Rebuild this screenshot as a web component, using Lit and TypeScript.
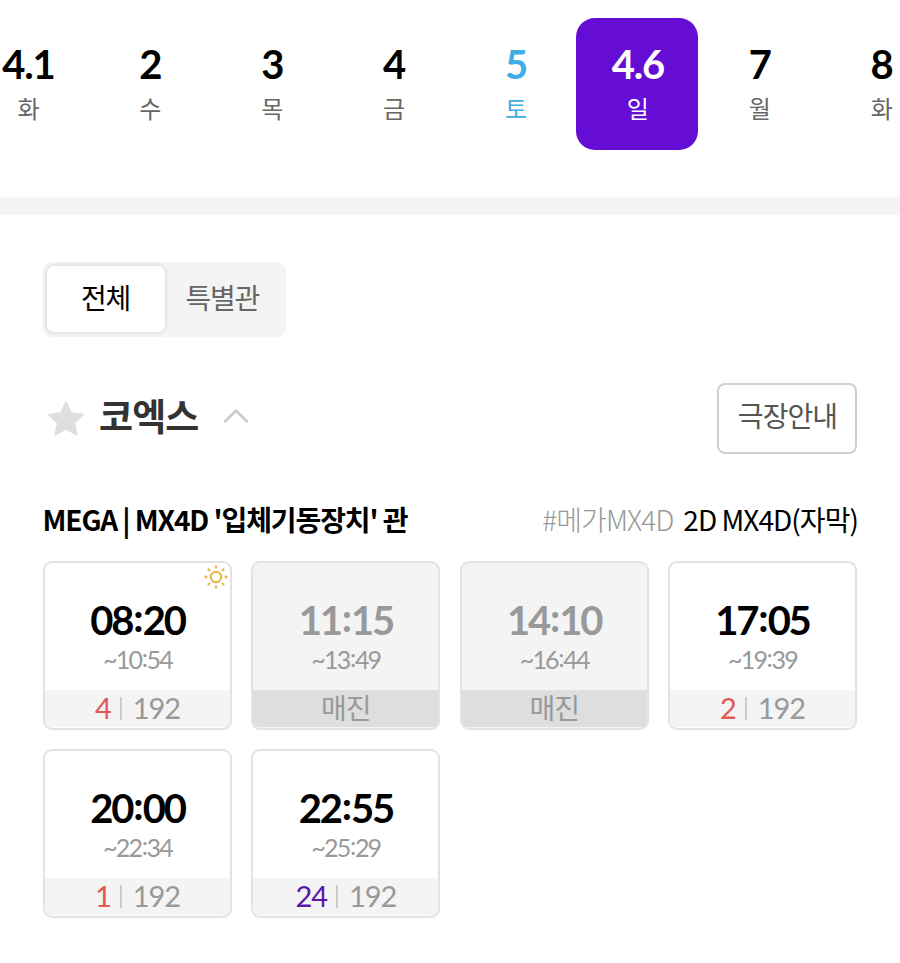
import { LitElement, html, css, svg, nothing } from "lit";
import { customElement, property } from "lit/decorators.js";
import { classMap } from "lit/directives/class-map.js";

interface Day {
  date: string;
  name: string;
  kind?: "sat" | "selected";
}

interface Show {
  start: string;
  end: string;
  left: number;
  total: number;
  early?: boolean;
}

const DAYS: Day[] = [
  { date: "4.1", name: "화" },
  { date: "2", name: "수" },
  { date: "3", name: "목" },
  { date: "4", name: "금" },
  { date: "5", name: "토", kind: "sat" },
  { date: "4.6", name: "일", kind: "selected" },
  { date: "7", name: "월" },
  { date: "8", name: "화" },
];

const SHOWS: Show[] = [
  { start: "08:20", end: "10:54", left: 4, total: 192, early: true },
  { start: "11:15", end: "13:49", left: 0, total: 192 },
  { start: "14:10", end: "16:44", left: 0, total: 192 },
  { start: "17:05", end: "19:39", left: 2, total: 192 },
  { start: "20:00", end: "22:34", left: 1, total: 192 },
  { start: "22:55", end: "25:29", left: 24, total: 192 },
];

/** Splits a clock value so that its colon can be centred on the digits. */
const clock = (value: string) => {
  const [h, m] = value.split(":");
  return html`${h}<span class="colon">:</span>${m}`;
};

@customElement("date-strip")
export class DateStrip extends LitElement {
  static styles = css`
    :host {
      display: block;
      overflow: hidden;
    }
    .strip {
      display: grid;
      grid-template-columns: repeat(8, 121.9px);
      margin-left: -33px;
      padding: 18px 0 47px;
    }
    .day {
      height: 132px;
      box-sizing: border-box;
      padding-top: 22px;
      border-radius: 19px;
      text-align: center;
      color: #000;
    }
    .date {
      font: 700 40px/48px Lato, sans-serif;
      letter-spacing: -1.2px;
      text-indent: 0.8px;
    }
    .name {
      margin-top: 2px;
      font: 400 24px/36px "Noto Sans CJK KR", sans-serif;
      text-indent: 1px;
      color: #666;
    }
    .sat .date,
    .sat .name {
      color: #41ade5;
    }
    .selected {
      background: #660dd5;
    }
    .selected .date,
    .selected .name {
      color: #fff;
    }
  `;

  render() {
    return html`<div class="strip">
      ${DAYS.map(
        (d) => html`<div
          class=${classMap({ day: true, sat: d.kind === "sat", selected: d.kind === "selected" })}
        >
          <div class="date">${d.date}</div>
          <div class="name">${d.name}</div>
        </div>`
      )}
    </div>`;
  }
}

@customElement("show-card")
export class ShowCard extends LitElement {
  @property({ attribute: false }) show!: Show;

  static styles = css`
    :host {
      display: block;
    }
    .card {
      position: relative;
      box-sizing: border-box;
      height: 169px;
      border: 2px solid #e3e3e3;
      border-radius: 9px;
      background: #fff;
      overflow: hidden;
      text-align: center;
      display: flex;
      flex-direction: column;
    }
    .body {
      flex: 1;
      padding-top: 33px;
    }
    .start {
      font: 700 40px/48px Lato, sans-serif;
      letter-spacing: -2.2px;
      color: #000;
    }
    .start .colon {
      margin: 0 1.2px 0 1px;
      vertical-align: 3px;
      line-height: 1;
    }
    .end {
      font: 400 25px/30px Lato, sans-serif;
      letter-spacing: -1.8px;
      color: #999;
    }
    .end .colon {
      margin: 0 0.5px 0 0.5px;
      vertical-align: 2px;
      line-height: 1;
    }
    .foot {
      height: 37px;
      box-sizing: border-box;
      padding-bottom: 1px;
      margin-bottom: 1px;
      background: #f4f4f4;
      display: flex;
      justify-content: center;
      align-items: center;
      font: 400 29px/36px Lato, sans-serif;
      letter-spacing: -1.1px;
      color: #999;
    }
    .left {
      color: #e35656;
    }
    .left.plenty {
      color: #5a16b0;
    }
    .bar {
      width: 2px;
      height: 23px;
      margin: 1px 11px 0 9px;
      background: #ccc;
    }
    .soldout {
      background: #f4f4f4;
    }
    .soldout .start {
      color: #999;
    }
    .soldout .foot {
      background: #dedede;
      font: 400 28px/35px "Noto Sans CJK KR", sans-serif;
      letter-spacing: -1px;
    }
    .soldout .foot span {
      margin-top: -2px;
    }
    .sun {
      position: absolute;
      top: 2px;
      right: 2px;
      width: 24px;
      height: 24px;
    }
  `;

  render() {
    const s = this.show;
    const soldOut = s.left === 0;
    return html`<div class=${classMap({ card: true, soldout: soldOut })}>
      ${s.early
        ? html`<svg class="sun" viewBox="0 0 24 24" fill="none" stroke="#eabb50" stroke-width="2.3">
            <circle cx="12" cy="12" r="5.2"></circle>
            ${[0, 45, 90, 135, 180, 225, 270, 315].map(
              (a) => svg`<path d="M12 .5v3" transform="rotate(${a} 12 12)"></path>`
            )}
          </svg>`
        : nothing}
      <div class="body">
        <div class="start">${clock(s.start)}</div>
        <div class="end">~${clock(s.end)}</div>
      </div>
      <div class="foot">
        ${soldOut
          ? html`<span>매진</span>`
          : html`<span class=${classMap({ left: true, plenty: s.left > 9 })}>${s.left}</span
              ><span class="bar"></span><span>${s.total}</span>`}
      </div>
    </div>`;
  }
}

@customElement("app-root")
export class AppRoot extends LitElement {
  static styles = css`
    :host {
      display: block;
      height: 963px;
      overflow: hidden;
      background: #fff;
      font-family: "Noto Sans CJK KR", sans-serif;
    }
    .divider {
      height: 18px;
      background: #f4f4f4;
    }
    .content {
      padding: 47px 43px 0;
    }
    .tabs {
      display: flex;
      width: 243px;
      height: 75px;
      box-sizing: border-box;
      padding: 4px;
      border-radius: 9px;
      background: #f4f4f4;
      font-size: 28px;
      line-height: 62px;
      letter-spacing: -1.2px;
      text-align: center;
      color: #666;
    }
    .tab {
      flex: 1;
      margin-left: -2px;
    }
    .tab.active {
      flex: 0 0 118px;
      height: 66px;
      margin-left: -0.5px;
      border-radius: 7px;
      background: #fff;
      box-shadow: 0 0 5px rgba(0, 0, 0, 0.16);
      color: #000;
    }
    .theater {
      display: flex;
      align-items: center;
      height: 71px;
      margin-top: 46px;
    }
    .star {
      width: 36px;
      height: 36px;
      margin-left: 5px;
    }
    .name {
      margin: -7px 0 0 15px;
      font-size: 37px;
      line-height: 50px;
      font-weight: 700;
      letter-spacing: -0.9px;
      color: #333;
    }
    .chevron {
      width: 26px;
      height: 16px;
      margin-left: 25px;
      margin-top: -5px;
    }
    .guide {
      margin-left: auto;
      width: 140px;
      height: 71px;
      box-sizing: border-box;
      padding-left: 1px;
      border: 2px solid #d0d0d0;
      border-radius: 8px;
      font-size: 28px;
      line-height: 61px;
      letter-spacing: -0.9px;
      text-align: center;
      color: #555;
    }
    .hall {
      display: flex;
      align-items: center;
      height: 40px;
      margin-top: 45px;
      font-size: 28px;
      line-height: 40px;
      letter-spacing: -1px;
      white-space: nowrap;
      color: #000;
    }
    .title {
      margin-left: -0.5px;
      font-weight: 700;
      letter-spacing: -1.1px;
    }
    .tag {
      margin-left: auto;
      font-weight: 300;
      letter-spacing: -0.9px;
      color: #999;
    }
    .format {
      margin-left: 10px;
      margin-right: -1px;
      letter-spacing: -0.95px;
    }
    .grid {
      display: grid;
      grid-template-columns: repeat(4, 189px);
      justify-content: space-between;
      row-gap: 18.5px;
      margin-top: 22px;
    }
  `;

  render() {
    return html`
      <date-strip></date-strip>
      <div class="divider"></div>
      <div class="content">
        <div class="tabs">
          <div class="tab active">전체</div>
          <div class="tab">특별관</div>
        </div>
        <div class="theater">
          <svg class="star" viewBox="0 0 36 36" fill="#dedede" stroke="#dedede" stroke-width="2" stroke-linejoin="round">
            <path d="M18 1.5l5 10.8 11.8 1.4-8.7 8.1 2.3 11.7L18 27.7 7.6 33.5l2.3-11.7-8.7-8.1L13 12.3z"></path>
          </svg>
          <div class="name">코엑스</div>
          <svg class="chevron" viewBox="0 0 26 16" fill="none" stroke="#ccc" stroke-width="3">
            <path d="M1.5 14L13 2.8 24.5 14"></path>
          </svg>
          <div class="guide">극장안내</div>
        </div>
        <div class="hall">
          <span class="title">MEGA | MX4D '입체기동장치' 관</span>
          <span class="tag">#메가MX4D</span>
          <span class="format">2D MX4D(자막)</span>
        </div>
        <div class="grid">${SHOWS.map((s) => html`<show-card .show=${s}></show-card>`)}</div>
      </div>
    `;
  }
}
